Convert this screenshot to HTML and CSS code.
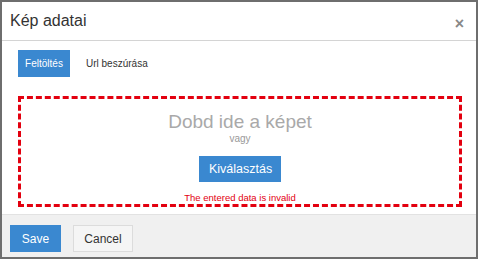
FILE: index.html
```html
<!DOCTYPE html>
<html>
<head>
  <title>Kép adatai</title>
  <link rel="stylesheet" href="styles.css">
</head>
<body>
  <div class="modal">
    <div class="modal-header">
      <h3 class="modal-title">Kép adatai</h3>
      <span class="close">&times;</span>
    </div>
    <div class="modal-body">
      <div class="tabs">
        <button class="tab active">Feltöltés</button>
        <button class="tab">Url beszúrása</button>
      </div>
      <div class="dropzone">
        <div class="drop-title">Dobd ide a képet</div>
        <div class="drop-or">vagy</div>
        <button class="btn btn-primary btn-pick">Kiválasztás</button>
        <div class="error">The entered data is invalid</div>
      </div>
    </div>
    <div class="modal-footer">
      <button class="btn btn-primary">Save</button>
      <button class="btn btn-default">Cancel</button>
    </div>
  </div>
</body>
</html>
```
FILE: styles.css
```css
html, body {
  margin: 0;
  height: 100%;
  background: #fff;
  font-family: "Liberation Sans", Arial, sans-serif;
}

.modal {
  width: 478px;
  height: 259px;
  box-sizing: border-box;
  border: 2px solid #6e6e6e;
  display: flex;
  flex-direction: column;
  background: #fff;
}

.modal-header {
  height: 38px;
  border-bottom: 1px solid #d4d4d4;
  display: flex;
  align-items: center;
  padding: 0 12px 0 8px;
}

.modal-title {
  flex: 1;
  margin: 0;
  font-size: 16px;
  font-weight: normal;
  color: #333;
}

.close {
  font-size: 16px;
  font-weight: bold;
  color: #888;
  margin-top: 5px;
}

.modal-body {
  flex: 1;
  padding: 9px 14px 0 16px;
}

.tabs {
  display: flex;
  gap: 7px;
}

.tab {
  height: 27px;
  padding: 0 9px;
  border: none;
  background: transparent;
  font-family: inherit;
  font-size: 10px;
  color: #333;
}

.tab.active {
  background: #3a88d0;
  color: #fff;
  width: 52px;
  padding: 0;
}

.dropzone {
  margin-top: 19px;
  height: 111px;
  box-sizing: border-box;
  border: 3px dashed #e3000f;
  display: flex;
  flex-direction: column;
  align-items: center;
  padding-top: 12px;
}

.drop-title {
  font-size: 19px;
  color: #a9a9a9;
  line-height: 22px;
}

.drop-or {
  font-size: 10px;
  color: #999;
  line-height: 12px;
}

.btn {
  height: 27px;
  border: none;
  font-family: inherit;
  font-size: 12px;
  padding: 0 10px;
}

.btn-primary {
  background: #3a88d0;
  color: #fff;
}

.btn-pick {
  margin-top: 11px;
  width: 82px;
  font-size: 12.5px;
}

.error {
  margin-top: 10px;
  font-size: 9.5px;
  color: #e3000f;
  line-height: 12px;
}

.modal-footer {
  height: 42px;
  box-sizing: content-box;
  background: #f0f0f0;
  border-top: 1px solid #e2e2e2;
  display: flex;
  align-items: flex-start;
  gap: 12px;
  padding: 10px 8px 0;
  height: 32px;
}

.modal-footer .btn-primary {
  width: 51px;
}

.btn-default {
  background: #f5f5f5;
  border: 1px solid #dcdcdc;
  color: #333;
  width: 60px;
}
```
